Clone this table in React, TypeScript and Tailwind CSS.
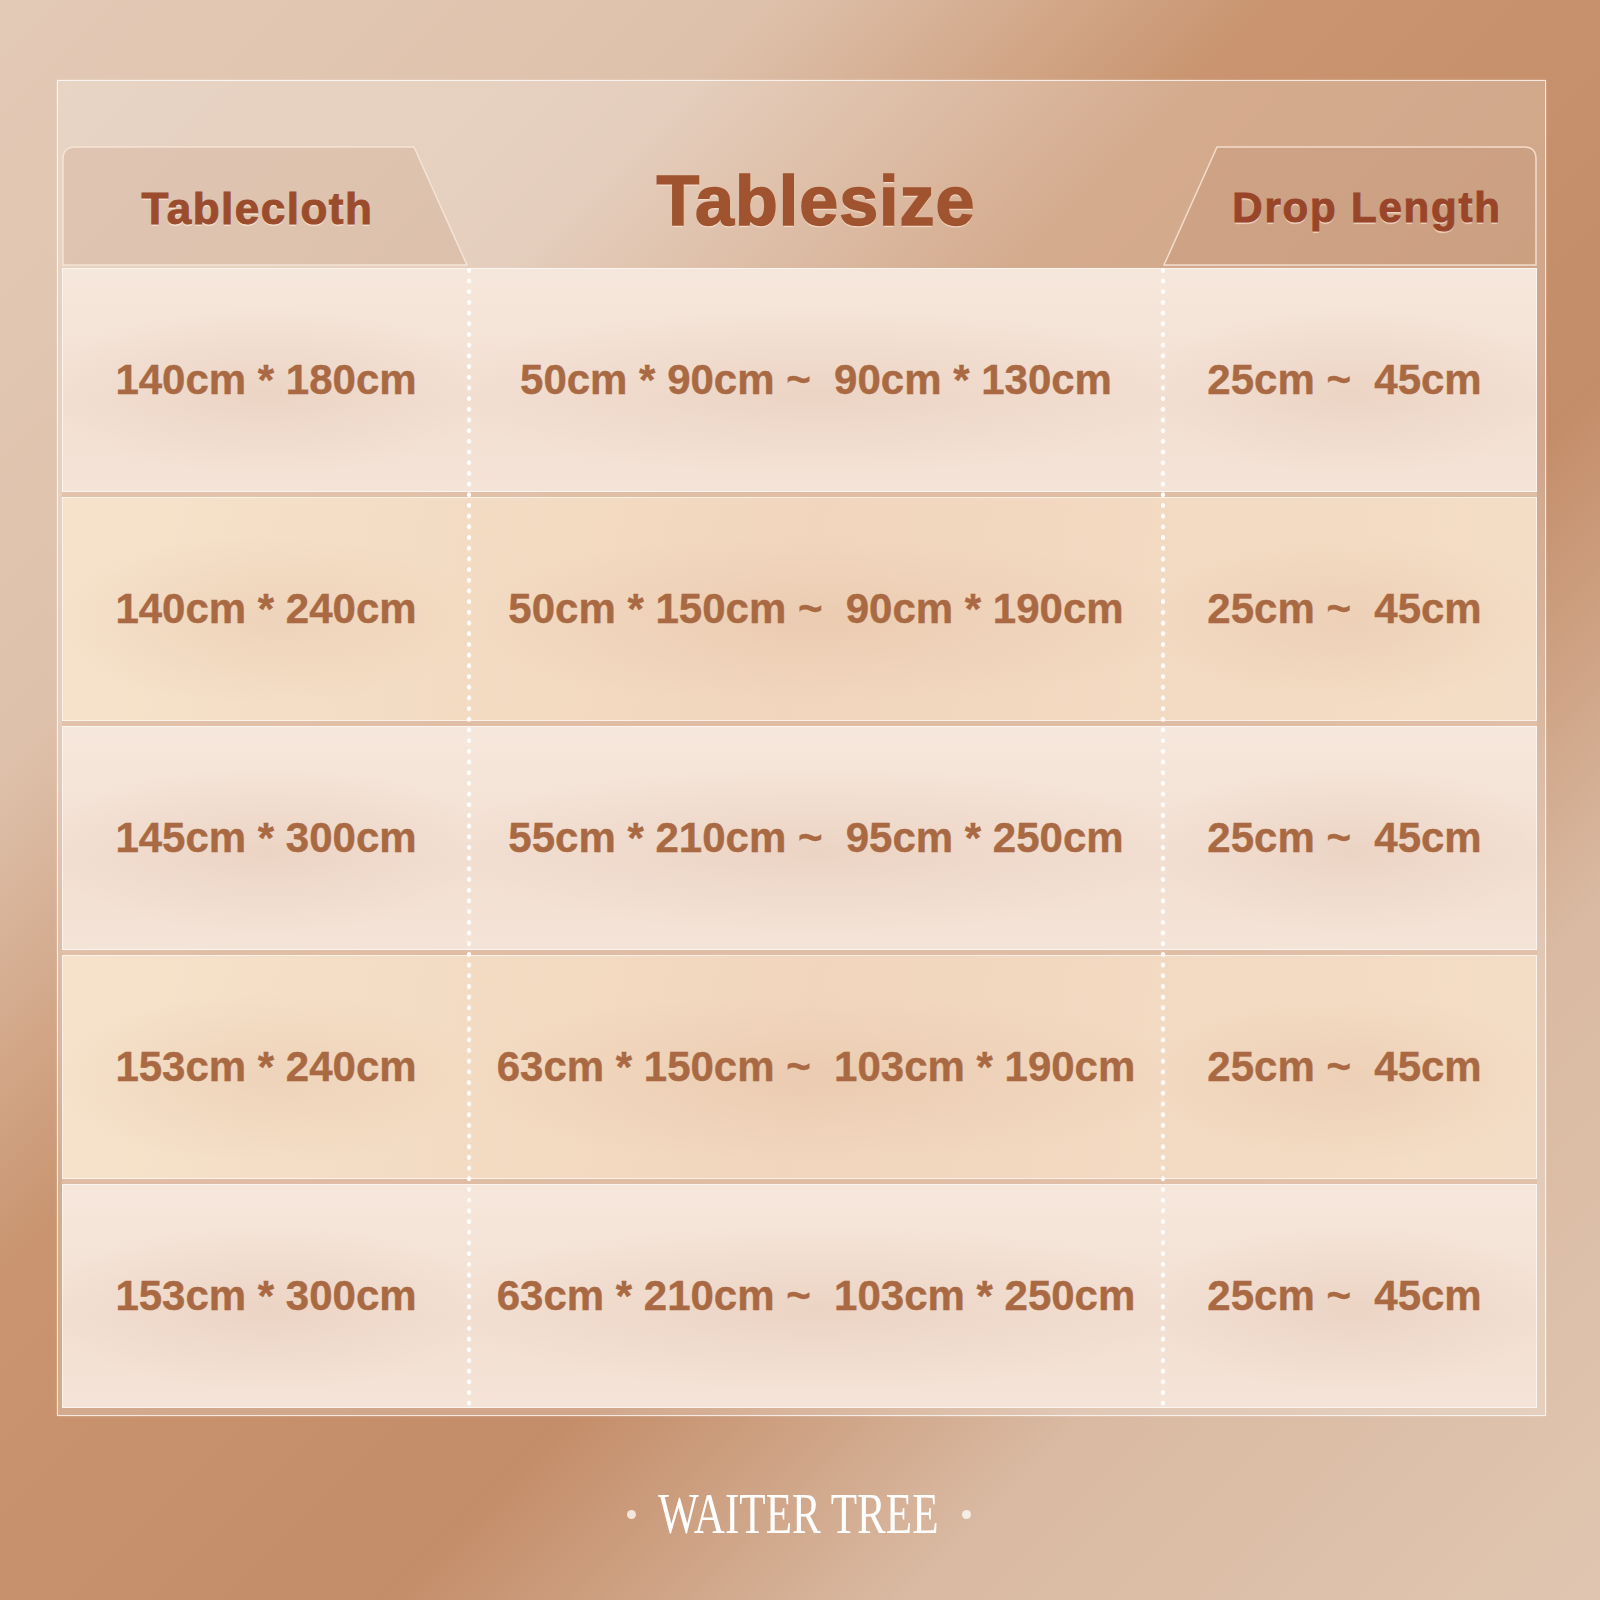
import React from "react";

const rows = [
  { a: "140cm * 180cm", b: "50cm * 90cm ~  90cm * 130cm", c: "25cm ~  45cm", tone: "pink" },
  { a: "140cm * 240cm", b: "50cm * 150cm ~  90cm * 190cm", c: "25cm ~  45cm", tone: "peach" },
  { a: "145cm * 300cm", b: "55cm * 210cm ~  95cm * 250cm", c: "25cm ~  45cm", tone: "pink" },
  { a: "153cm * 240cm", b: "63cm * 150cm ~  103cm * 190cm", c: "25cm ~  45cm", tone: "peach" },
  { a: "153cm * 300cm", b: "63cm * 210cm ~  103cm * 250cm", c: "25cm ~  45cm", tone: "pink" },
];

function Cell({ text, cls }: { text: string; cls: string }) {
  return (
    <div
      className={`${cls} h-full flex items-center justify-center bg-[radial-gradient(ellipse_55%_38%_at_50%_55%,rgba(190,130,90,0.12),transparent_100%)]`}
    >
      <span className="whitespace-pre font-['Liberation_Sans',Arial,sans-serif] font-bold text-[42px] leading-none text-[#a96a43] [-webkit-text-stroke:0.4px_#a96a43]">
        {text}
      </span>
    </div>
  );
}

export default function App() {
  return (
    <div className="w-[1600px] h-[1600px] overflow-hidden bg-[linear-gradient(135deg,#e3cab6_0%,#dec1ab_24%,#c9946f_40%,#c48d69_62%,#d9b9a1_78%,#e0c6b1_100%)] pl-[57px] pt-[80px]">
      {/* Frame */}
      <div className="w-[1489px] h-[1336px] border border-white/75 bg-white/[0.22] pt-[65px] pl-[4px] pr-[8px] pb-[7px] flex flex-col shadow-[0_0_2px_rgba(255,255,255,0.4)]">
        {/* Header */}
        <div className="h-[120px] flex">
          <div className="relative w-[407px] h-full flex items-center justify-center pr-[16px] pt-[6px]">
            <svg className="absolute inset-0" width="407" height="120" viewBox="0 0 407 120">
              <path
                d="M1,119 L1,13 Q1,1 13,1 L352,1 L405,119 Z"
                fill="rgba(160,100,60,0.13)"
                stroke="#f5e3d5"
                strokeWidth="1.5"
              />
            </svg>
            <span className="relative font-['Liberation_Sans',Arial,sans-serif] font-bold text-[44px] leading-none tracking-[1.5px] text-[#9b4c2d] [-webkit-text-stroke:1px_#9b4c2d] [text-shadow:0_1.5px_1px_rgba(255,236,222,0.75)]">
              Tablecloth
            </span>
          </div>
          <div className="flex-1 h-full flex items-center justify-center pb-[10px]">
            <span className="font-['Liberation_Sans',Arial,sans-serif] font-bold text-[70px] leading-none tracking-[1px] text-[#a0532f] [-webkit-text-stroke:1.5px_#a0532f] [text-shadow:0_2px_1px_rgba(255,232,215,0.7)]">
              Tablesize
            </span>
          </div>
          <div className="relative w-[374px] h-full flex items-center justify-center pl-[34px] pt-[4px]">
            <svg className="absolute inset-0" width="374" height="120" viewBox="0 0 374 120">
              <path
                d="M1,119 L54,1 L361,1 Q373,1 373,13 L373,119 Z"
                fill="rgba(160,100,60,0.1)"
                stroke="#f3dccb"
                strokeWidth="1.5"
              />
            </svg>
            <span className="relative font-['Liberation_Sans',Arial,sans-serif] font-bold text-[42px] leading-none tracking-[1.8px] text-[#98452a] [-webkit-text-stroke:1px_#98452a] [text-shadow:0_1.5px_1px_rgba(255,232,215,0.7)]">
              Drop Length
            </span>
          </div>
        </div>

        {/* Rows */}
        <div className="relative mt-[2px] flex flex-col gap-[5px] bg-[rgba(226,192,168,0.85)]">
          {rows.map((r, i) => (
            <div
              key={i}
              className={`h-[224px] flex border border-white/60 ${
                r.tone === "pink"
                  ? "bg-[linear-gradient(180deg,#f6e7dc_0%,#f2dfd2_60%,#f4e3d7_100%)]"
                  : "bg-[linear-gradient(100deg,#f6e2cb_0%,#f1d6bd_50%,#f4ddc6_100%)]"
              }`}
            >
              <Cell text={r.a} cls="w-[406px]" />
              <Cell text={r.b} cls="flex-1" />
              <Cell text={r.c} cls="w-[373px] pr-[10px]" />
            </div>
          ))}
          {/* dotted separators */}
          <div className="absolute left-[404px] top-[-3px] bottom-0 w-[6px] bg-[radial-gradient(circle,rgba(255,255,255,0.95)_2px,transparent_2.6px)] bg-[length:6px_10.7px]" />
          <div className="absolute left-[1098px] top-[-3px] bottom-0 w-[6px] bg-[radial-gradient(circle,rgba(255,255,255,0.95)_2px,transparent_2.6px)] bg-[length:6px_10.7px]" />
        </div>
      </div>

      {/* Brand */}
      <div className="mt-[68px] h-[60px] w-[1489px] flex items-center justify-center gap-[20px] pr-[6px]">
        <div className="w-[9px] h-[9px] rounded-full bg-white/75" />
        <div className="w-[286px] flex justify-center">
          <span className="inline-block whitespace-nowrap scale-x-[0.77] font-['Liberation_Serif','Times_New_Roman',serif] text-[56px] leading-none text-white">
            WAITER TREE
          </span>
        </div>
        <div className="w-[9px] h-[9px] rounded-full bg-white/75" />
      </div>
    </div>
  );
}
